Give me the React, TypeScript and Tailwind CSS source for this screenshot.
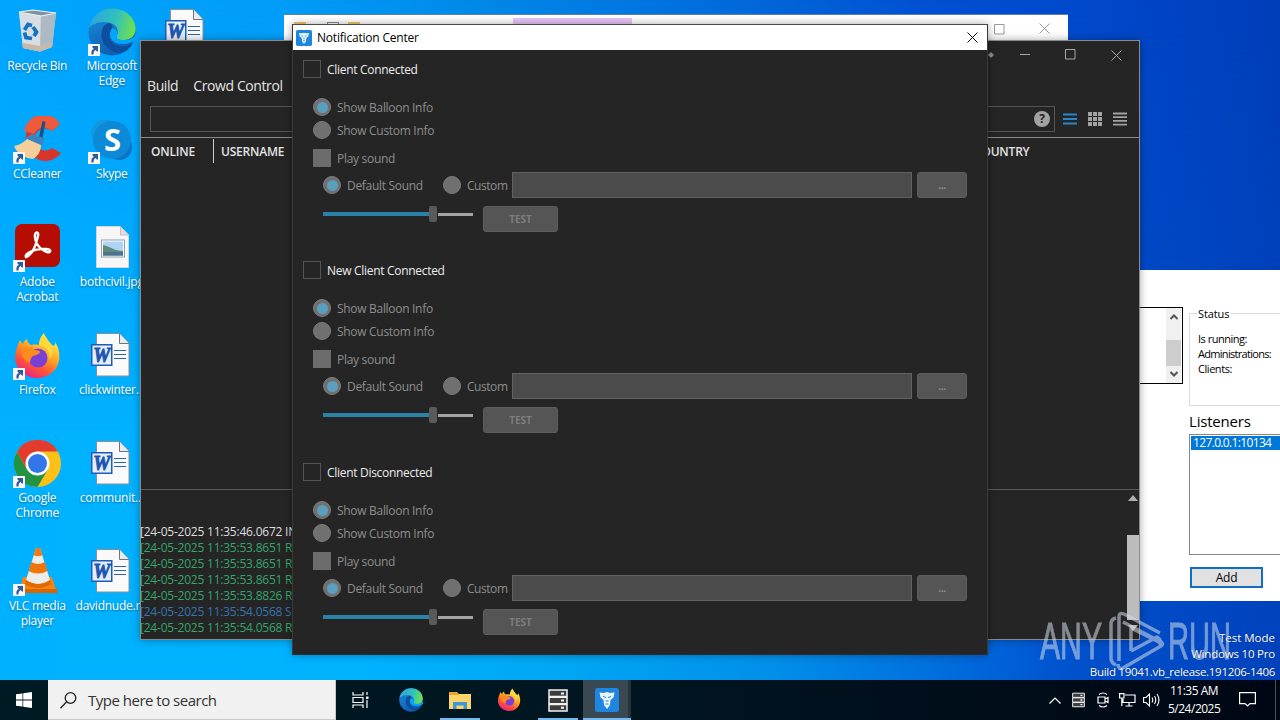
import type { ReactNode } from "react";

// --- Icons ---

const RecycleIcon = () => (
  <svg viewBox="0 0 48 48" className="w-12 h-12">
    <path d="M6 4 20 2 43 5 39 39 27 43.500 10 40z" fill="#c9d3da" />
    <path d="M6 4 28 8 27 43.500 10 40z" fill="#d6dde3" />
    <path d="M28 8 43 5 39 39 27 43.500z" fill="#aebac3" />
    <path d="M6 4 20 2 43 5 28 8z" fill="#7f939f" stroke="#eef3f5" strokeWidth="1.200" />
    <path d="M9.500 35 27 38 39.500 34 39 39 27 43.500 10 40z" fill="#c9b8a8" />
    <g fill="none" stroke="#1272c4" strokeWidth="3.800">
      <path d="m11.500 22 3.500-5.500 4 1" />
      <path d="m20 19 3.500 5-2.500 4" />
      <path d="m19 30.500-6-1-1.500-5" />
    </g>
  </svg>
);

const EdgeIcon = ({ className }: { className: string }) => (
  <svg viewBox="0 0 48 48" className={className}>
    <defs>
      <linearGradient id="edgeTop" x1="0" y1="0.300" x2="1" y2="0.500">
        <stop offset="0" stopColor="#2ba5e0" />
        <stop offset="0.550" stopColor="#30c0c0" />
        <stop offset="1" stopColor="#6fe04c" />
      </linearGradient>
      <linearGradient id="edgeLow" x1="0" y1="0" x2="0.400" y2="1">
        <stop offset="0" stopColor="#1a8fdc" />
        <stop offset="1" stopColor="#0f5fb4" />
      </linearGradient>
    </defs>
    <circle cx="24" cy="24" r="23.500" fill="url(#edgeLow)" />
    <path d="M1 20C3 8 13 .5 24 .5 38 .5 47.500 10 47.500 21c0 7-5 11-12 11-6 0-8-2-7-4 3-4 1-11-6-13C13 12 4 16 1 20z" fill="url(#edgeTop)" />
    <path d="M21 15c-8 2-9 12-6 19 3 6 9 10 15 11 7 0 12-4 14-9-6 4-16 3-20-2-3-4-3-8 0-12 1-4 0-6-3-7z" fill="#0d4f9e" />
    <path d="M24 20c-4 6-2 12 4 15 6 2 12 1 16-1l4-2v-6c-2 4-6 6-12 6-6 0-8-2-7-4 2-3 0-7-5-8z" fill="#02a5fc" />
  </svg>
);

const WordIcon = () => (
  <svg viewBox="0 0 48 48" className="w-12 h-12">
    <path d="M8.500 1.500h23l9.500 10v32.500h-32.500z" fill="#fafafa" stroke="#8a8f96" />
    <path d="M31.500 1.500v10h9.500" fill="#e8ecf0" stroke="#6d747c" />
    <path d="M26 18.500h12M26 22.500h12M26 26.500h12" stroke="#2b63b5" strokeWidth="1.200" />
    <rect x="3" y="12" width="21.500" height="22" fill="#1f5bb9" />
    <rect x="4.500" y="13.500" width="18.500" height="19" fill="#e4edf9" />
    <text x="13.700" y="30" textAnchor="middle" fontSize="20" textLength="17" lengthAdjust="spacingAndGlyphs" fontWeight="bold" fontStyle="italic" fontFamily="Liberation Serif, serif" fill="#1b55b0" stroke="#1b55b0" strokeWidth="0.900">W</text>
  </svg>
);

const CCleanerIcon = () => (
  <svg viewBox="0 0 48 48" className="w-12 h-12">
    <path d="M47 8A20 22 0 1 0 48 37L39 32A11 11 0 1 1 39 15z" fill="#d8352a" />
    <path d="M47 8A20 22 0 0 0 11 15l10 3A11 11 0 0 1 39 15z" fill="#ee5a3c" />
    <path d="m26 21 3.500-16 3 1-3 16z" fill="#1c4f80" />
    <path d="m12 22 7-4 12 4-1 7-17-2z" fill="#3c84c0" />
    <path d="M1 30c6-1 10-4 13-7l14 6c0 6-3 11-8 14C12 42 4 38 1 30z" fill="#f4cf9c" />
  </svg>
);

const SkypeIcon = () => (
  <svg viewBox="0 0 48 48" className="w-12 h-12">
    <circle cx="17" cy="17" r="13.500" fill="#1296dc" />
    <circle cx="31" cy="31" r="13" fill="#0a73c4" />
    <circle cx="24" cy="24" r="19" fill="#0c8ad8" />
    <text x="24.500" y="35" textAnchor="middle" fontSize="31" fontWeight="bold" fontFamily="Open Sans, sans-serif" fill="#fff">S</text>
  </svg>
);

const AcrobatIcon = () => (
  <svg viewBox="0 0 48 48" className="w-12 h-12">
    <rect x="2" y="0" width="45" height="43" rx="7" fill="#b50d02" />
    <path d="M13 33c-2-3 8-9 20-8 6 .500 5 4 1 3C27 26 21 18 22 11c.500-4 4-3 3 1-2 9-6 19-12 21z" fill="none" stroke="#fff" strokeWidth="2.400" />
  </svg>
);

const ImageFileIcon = () => (
  <svg viewBox="0 0 48 48" className="w-12 h-12">
    <path d="M8.500 2.500h24l8 8.500v32.500h-32z" fill="#f8f7f8" stroke="#d9d4d8" />
    <path d="M32.500 2.500v8.500h8z" fill="#e4dde2" stroke="#c4bcc4" />
    <rect x="13" y="15.500" width="24" height="18" fill="#8fa0b0" />
    <rect x="14" y="16.500" width="22" height="16" fill="#fff" />
    <rect x="15" y="17.500" width="20" height="14" fill="#b0d4f4" />
    <path d="M15 21c8 2 12 6 20 6v4.500h-20z" fill="#5d8a7c" />
    <path d="M15 28h20v3.500h-20z" fill="#4c7390" />
  </svg>
);

const FirefoxIcon = ({ className }: { className: string }) => (
  <svg viewBox="0 0 48 48" className={className}>
    <defs>
      <linearGradient id="fox" x1="0.800" y1="0.100" x2="0.300" y2="1">
        <stop offset="0" stopColor="#fff04a" />
        <stop offset="0.400" stopColor="#ffa325" />
        <stop offset="0.700" stopColor="#ff5536" />
        <stop offset="1" stopColor="#e8208a" />
      </linearGradient>
    </defs>
    <path d="M7 8c1 2 2 3 3 4 1-3 2-4 4-5 0 3 2 5 4 6 5-1 8 0 8 0 0-6 3-10 5-12 1 7 6 9 9 13 3-1 2-3 2-4 4 6 5 12 4 19-2 10-11 17-22 17S3 38 2 27c0-7 2-13 5-19z" fill="url(#fox)" />
    <circle cx="25" cy="26" r="9.500" fill="#7a3fd6" />
    <path d="M9 16c5-2 9-1 13 2 3 0 5 1 5 2-1 3-5 3-7 4-3 2-2 6-4 7-6-3-9-9-7-15z" fill="#ff8a1e" />
    <path d="M26 13c8 1 12 7 10 15 5-6 4-12 1-17l-6-9c-3 4-5 7-5 11z" fill="#ffd83a" />
  </svg>
);

const ChromeIcon = () => (
  <svg viewBox="0 0 48 48" className="w-12 h-12">
    <circle cx="24.500" cy="23.500" r="23.500" fill="#fbc116" />
    <path d="M24.500 23.500 14.100 29.500 4.100 11.700A23.500 23.500 0 0 0 24.500 47L34.900 29.500z" fill="#229342" />
    <path d="M24.500 11.500H44.900A23.500 23.500 0 0 0 4.100 11.700L14.100 29.500z" fill="#e33b2e" />
    <circle cx="24.500" cy="23.500" r="12" fill="#fff" />
    <circle cx="24.500" cy="23.500" r="9.500" fill="#3277ea" />
  </svg>
);

const VlcIcon = () => (
  <svg viewBox="0 0 48 48" className="w-12 h-12">
    <path d="M10 29h29l5 16H6z" fill="#f58410" />
    <path d="M6 41h38l1 4H5z" fill="#d96400" />
    <path d="M23 0q2-1.500 4 0l10 32q-12 8-24 0z" fill="#ececec" />
    <path d="M23 0q2-1.500 4 0l2.500 7q-4.500 2.500-9 0z" fill="#f27a10" />
    <path d="m18.500 14q6.500 4 13 0l3 9q-9.500 5-19 0z" fill="#f07408" />
    <path d="M13 32q12 8 24 0l1.500 4q-13.500 8-27 0z" fill="#e06a00" />
  </svg>
);

const ShortcutBadge = () => (
  <svg viewBox="0 0 12 12" className="absolute left-0 bottom-0 w-3 h-3">
    <path d="M0 0h12v12H0z" fill="#f7f7f7" />
    <path d="M3.500 10.500C3 7 4 5.500 6 5L4.500 3.500V2H10v5.500H9L7.500 6C6 7 5.500 8 5.500 10.500z" fill="#2c5a9c" />
  </svg>
);

// white figure on a blue tile, used by the dialog title and the taskbar
const AppIcon = ({ className }: { className: string }) => (
  <svg viewBox="0 0 24 24" className={className}>
    <rect width="24" height="24" rx="2.500" fill="#1f86e0" />
    <path d="M4.500 4.500 9 5l3-1 3 1 4.500-.500-1 5-3 2.500-.500 5L12 21l-3-4-.500-5-3-2.500z" fill="#e8f4ff" />
    <path d="m8 8.500 3 1M16 8.500l-3 1M10.500 13h3M10.500 16h3" stroke="#1f86e0" />
  </svg>
);

const ServerIcon = ({ className }: { className: string }) => (
  <svg viewBox="0 0 20 23" className={className} fill="#3d3d3d" stroke="#f2f2f2" strokeWidth="1.500">
    <path d="M1 1h18v6.500H1zM1 8.200h18v6.500H1zM1 15.400h18v6.500H1z" />
    <path d="M13 4.500h3M13 11.500h3M13 18.700h3" strokeWidth="2" />
  </svg>
);

const FolderIcon = () => (
  <svg viewBox="0 0 22 19" className="w-[22px] h-[19px]">
    <path d="M0 1h8l2 2h12v15H0z" fill="#e8a82c" />
    <path d="M0 4h9l1.500-1H22v15H0z" fill="#fcd56a" />
    <path d="M4 18v-7h14v7h-3.500v-3.500h-7V18z" fill="#3f97d8" />
  </svg>
);

const CloseIcon = ({ className }: { className: string }) => (
  <svg viewBox="0 0 11 11" className={className} fill="none" stroke="currentColor">
    <path d="m.500.500 10 10M10.500.500l-10 10" />
  </svg>
);

const MaxIcon = ({ className }: { className: string }) => (
  <svg viewBox="0 0 11 11" className={className} fill="none" stroke="currentColor">
    <path d="M.5.500h9.500v9.500H.5z" />
  </svg>
);

// --- Desktop ---

type Item = { icon: ReactNode; label: string[]; shortcut?: boolean };

const columns: Item[][] = [
  [
    { icon: <RecycleIcon />, label: ["Recycle Bin"] },
    { icon: <CCleanerIcon />, label: ["CCleaner"], shortcut: true },
    { icon: <AcrobatIcon />, label: ["Adobe", "Acrobat"], shortcut: true },
    { icon: <FirefoxIcon className="w-12 h-12" />, label: ["Firefox"], shortcut: true },
    { icon: <ChromeIcon />, label: ["Google", "Chrome"], shortcut: true },
    { icon: <VlcIcon />, label: ["VLC media", "player"], shortcut: true },
  ],
  [
    { icon: <EdgeIcon className="w-12 h-12" />, label: ["Microsoft", "Edge"], shortcut: true },
    { icon: <SkypeIcon />, label: ["Skype"], shortcut: true },
    { icon: <ImageFileIcon />, label: ["bothcivil.jpg"] },
    { icon: <WordIcon />, label: ["clickwinter..."] },
    { icon: <WordIcon />, label: ["communit..."] },
    { icon: <WordIcon />, label: ["davidnude.rtf"] },
  ],
  [{ icon: <WordIcon />, label: [] }],
];

const Desktop = () => (
  <div className="flex pt-2">
    {columns.map((col, i) => (
      <div key={i} className="w-[74.5px] flex flex-col">
        {col.map((item, j) => (
          <div key={j} className="h-[108px] flex flex-col items-center">
            <div className="relative w-12 h-12">
              {item.icon}
              {item.shortcut && <ShortcutBadge />}
            </div>
            <div className="mt-[2px] text-xs leading-[15px] tracking-[-0.25px] text-white text-center whitespace-nowrap [text-shadow:0_1px_2px_rgba(0,0,0,0.4)]">
              {item.label.map((line) => (
                <div key={line}>{line}</div>
              ))}
            </div>
          </div>
        ))}
      </div>
    ))}
  </div>
);

// --- Windows behind the dialog ---

const ExplorerWindow = () => (
  <div className="absolute left-[284px] top-[14px] w-[784px] h-[60px] bg-white border-t border-[#5b7fa8] flex items-start text-[#999]">
    <div className="ml-[10px] mt-[7px] w-3 h-3 bg-[#f6c667]" />
    <div className="ml-[21px] mt-[7px] w-3 h-3 border border-[#888]" />
    <div className="ml-[9px] mt-[7px] w-3 h-3 bg-[#f6c667]" />
    <div className="ml-[153px] mt-[3px] w-[119px] h-5 bg-[#e6c6f8]" />
    <MaxIcon className="ml-[362px] mt-[9px] w-[11px] h-[11px]" />
    <CloseIcon className="ml-[34px] mt-[8px] w-[11px] h-[11px]" />
  </div>
);

const ServerWindow = () => (
  <div className="absolute left-[1130px] top-[270px] w-[150px] h-[331px] bg-white overflow-hidden flex text-[11px] leading-[15px] text-black tracking-[-0.3px]">
    <div className="shrink-0 mt-[37px] w-[53px] h-[77px] border border-black flex justify-end pr-px">
      <div className="w-[15px] bg-[#f0f0f0] flex flex-col items-center justify-between py-[6px]">
        <svg viewBox="0 0 8 6" className="w-2 h-1.5" fill="none" stroke="#555" strokeWidth="2">
          <path d="m.500 5 3.500-3.500L7.500 5" />
        </svg>
        <div className="w-[15px] h-[26px] mt-[15px] bg-[#cdcdcd]" />
        <svg viewBox="0 0 8 6" className="w-2 h-1.5" fill="none" stroke="#555" strokeWidth="2">
          <path d="m.500 1 3.500 3.500L7.500 1" />
        </svg>
      </div>
    </div>
    <div className="shrink-0 ml-[6px] w-[120px] flex flex-col">
      <div className="mt-[43px] h-[93px] border border-[#dcdcdc] pl-2">
        <div className="-mt-[8px] -ml-px w-[34px] bg-white pl-px tracking-[-0.1px]">Status</div>
        <div className="mt-[10px] whitespace-nowrap tracking-[-0.5px]">Is running:</div>
        <div className="whitespace-nowrap tracking-[-0.7px]">Administrations:</div>
        <div className="whitespace-nowrap tracking-[-0.45px]">Clients:</div>
      </div>
      <div className="mt-[5px] h-[20px] text-[15px] leading-[20px] tracking-[-0.2px]">Listeners</div>
      <div className="mt-[3px] h-[121px] border border-[#828790] p-px">
        <div className="h-[14px] leading-[14px] bg-[#0078d7] text-white pl-[2px] text-[12px] tracking-[-0.65px]">127.0.0.1:10134</div>
      </div>
      <div className="mt-[12px] ml-px w-[73px] h-[21px] border-2 border-[#0f6fc0] bg-[#e1e1e1] text-[12px] leading-[17px] text-center">Add</div>
    </div>
  </div>
);

const logs = [
  { text: "[24-05-2025 11:35:46.0672 INFO]", color: "text-[#dedede]" },
  { text: "[24-05-2025 11:35:53.8651 RECV]", color: "text-[#33a56c]" },
  { text: "[24-05-2025 11:35:53.8651 RECV]", color: "text-[#33a56c]" },
  { text: "[24-05-2025 11:35:53.8651 RECV]", color: "text-[#33a56c]" },
  { text: "[24-05-2025 11:35:53.8826 RECV]", color: "text-[#33a56c]" },
  { text: "[24-05-2025 11:35:54.0568 SEND]", color: "text-[#3474b4]" },
  { text: "[24-05-2025 11:35:54.0568 RECV]", color: "text-[#33a56c]" },
];

const MainWindow = () => (
  <div className="absolute left-[140px] top-[40px] w-[1000px] h-[600px] bg-[#252525] border border-[#8c8c8c] flex flex-col text-[#e4e4e4] shadow-[0_0_8px_rgba(0,0,0,0.35)]">
    <div className="h-[30px] flex justify-end items-start pr-[17px] text-[#a8a8a8]">
      <svg viewBox="0 0 6 8" className="w-1.5 h-2 mt-[10px] mr-[26px]">
        <path d="m3 1 3 3-3 3-3-3z" fill="#8a8a8a" />
      </svg>
      <div className="w-[10px] h-px mt-[13px] mr-[35px] bg-[#a8a8a8]" />
      <MaxIcon className="mt-[8px] mr-[35px] w-[11px] h-[11px]" />
      <CloseIcon className="mt-[9px] w-[11px] h-[11px]" />
    </div>
    <div className="h-[30px] flex items-center gap-[15px] pl-[6px] pb-[2px] text-[14px] tracking-[-0.4px]">
      <span>Build</span>
      <span>Crowd Control</span>
    </div>
    <div className="h-[37px] flex items-center pl-[9px] pr-[11px] border-b border-[#8a8a8a] text-[#a2a2a2]">
      <div className="w-[905px] h-[26px] border border-[#555] flex items-center justify-end pr-[4px]">
        <div className="w-4 h-4 rounded-full bg-[#a2a2a2] text-[#252525] text-[12px] font-bold leading-4 text-center">?</div>
      </div>
      <svg viewBox="0 0 14 14" className="ml-2 w-3.5 h-3.5" stroke="#2a86cc" strokeWidth="1.800">
        <path d="M0 2.500h14M0 7h14M0 11.500h14" />
      </svg>
      <svg viewBox="0 0 14 14" className="ml-[11px] w-3.5 h-3.5" stroke="#a2a2a2" strokeWidth="4" strokeDasharray="4 1">
        <path d="M0 2h14M0 7h14M0 12h14" />
      </svg>
      <svg viewBox="0 0 14 14" className="ml-[11px] w-3.5 h-3.5" stroke="#a2a2a2" strokeWidth="1.800">
        <path d="M0 1.500h14M0 5.200h14M0 8.900h14M0 12.600h14" />
      </svg>
    </div>
    <div className="h-[26px] flex items-center text-[12px] leading-6 font-semibold tracking-[-0.2px]">
      <div className="w-[73px] h-6 pl-[10px] pt-px border-r border-[#ccc]">ONLINE</div>
      <div className="w-[760px] h-6 pl-[7px] pt-px">USERNAME</div>
      <div className="h-6 pt-px">COUNTRY</div>
    </div>
    <div className="flex-1" />
    <div className="h-[150px] border-t border-[#5a5a5a] flex justify-between">
      <div className="pt-[34px] -ml-px text-[12px] leading-4 tracking-[-0.22px] whitespace-nowrap">
        {logs.map((log, i) => (
          <div key={i} className={log.color}>{log.text}</div>
        ))}
      </div>
      <div className="w-3 flex flex-col items-center">
        <svg viewBox="0 0 10 6" className="mt-[5px] w-2.5 h-1.5">
          <path d="M5 0l5 6H0z" fill="#b0b0b0" />
        </svg>
        <div className="mt-[34px] w-3 h-[85px] bg-[#bcbcbc]" />
        <svg viewBox="0 0 10 6" className="mt-[5px] w-2.5 h-1.5">
          <path d="M0 0h10L5 6z" fill="#b0b0b0" />
        </svg>
      </div>
    </div>
  </div>
);

// --- Notification Center ---

const Radio = ({ label, checked }: { label: string; checked?: boolean }) => (
  <div className="h-[18px] flex items-center gap-[6px]">
    <div className="w-[18px] h-[18px] rounded-full bg-[#707070] border border-[#7c7c7c] flex items-center justify-center">
      {checked && <div className="w-[11px] h-[11px] rounded-full bg-[#5b9fbe]" />}
    </div>
    <span className="pt-[2px]">{label}</span>
  </div>
);

const Section = ({ title, className }: { title: string; className: string }) => (
  <section className={`pt-[10px] pl-[10px] flex flex-col text-[12px] leading-[18px] tracking-[-0.3px] text-[#8e8e8e] whitespace-nowrap ${className}`}>
    <div className="h-[18px] flex items-center gap-[6px] text-[#ececec]">
      <div className="w-[18px] h-[18px] border border-[#545454]" />
      <span className="pt-[2px]">{title}</span>
    </div>
    <div className="mt-5 pl-[10px] flex flex-col gap-[5px]">
      <Radio label="Show Balloon Info" checked />
      <Radio label="Show Custom Info" />
    </div>
    <div className="mt-[10px] h-[18px] pl-[10px] flex items-center gap-[6px]">
      <div className="w-[18px] h-[18px] bg-[#6c6c6c]" />
      <span className="pt-[2px]">Play sound</span>
    </div>
    <div className="mt-[5px] pl-[20px] h-[26px] flex items-center">
      <div className="w-[120px]">
        <Radio label="Default Sound" checked />
      </div>
      <div className="w-[69px] tracking-[-0.45px]">
        <Radio label="Custom" />
      </div>
      <div className="w-[400px] h-[26px] bg-[#4b4b4b] border border-[#626262]" />
      <div className="ml-[5px] w-[50px] h-[26px] rounded-[3px] bg-[#555] border border-[#5e5e5e] text-[10px] font-bold leading-[25px] text-center">...</div>
    </div>
    <div className="mt-2 pl-[20px] flex items-start">
      <div className="w-[150px] h-4 flex items-center">
        <div className="w-[106px] h-1 bg-[#2a82a8]" />
        <div className="w-2 h-4 rounded-[2px] bg-[#5a5a5a]" />
        <div className="ml-px flex-1 h-[3px] bg-[#a4a4a4]" />
      </div>
      <div className="ml-[10px] w-[75px] h-[26px] rounded-[3px] bg-[#555] border border-[#5e5e5e] text-[10px] font-bold leading-[25px] tracking-normal text-center text-[#7d7d7d]">TEST</div>
    </div>
  </section>
);

const NotificationCenter = () => (
  <div className="absolute left-[292px] top-[24px] w-[696px] h-[631px] bg-[#252525] border border-[#3a3a3a] border-t-[#4a4a4a] border-b-[#2c2c2c] flex flex-col shadow-[0_0_8px_rgba(0,0,0,0.35)]">
    <div className="h-[25px] bg-white flex items-center text-black text-[12px] tracking-[-0.2px]">
      <AppIcon className="ml-[3px] w-4 h-4" />
      <span className="ml-[5px]">Notification Center</span>
      <CloseIcon className="ml-auto mr-[9px] w-[11px] h-[11px]" />
    </div>
    <Section title="Client Connected" className="h-[201px]" />
    <Section title="New Client Connected" className="h-[202px]" />
    <Section title="Client Disconnected" className="h-[200px]" />
  </div>
);

// --- Overlays on the wallpaper ---

const Watermark = () => (
  <svg viewBox="0 0 200 70" className="absolute left-[1035px] top-[605px] w-[200px] h-[70px] opacity-55">
    <g fill="#d4dcea" stroke="#d4dcea" strokeWidth="1" fontFamily="Liberation Sans Narrow, Liberation Sans, sans-serif" fontSize="52">
      <text x="5" y="54" textLength="62" lengthAdjust="spacingAndGlyphs">ANY</text>
      <text x="133" y="54" textLength="63" lengthAdjust="spacingAndGlyphs">RUN</text>
    </g>
    <g fill="none" stroke="#d4dcea" strokeWidth="3.500" strokeLinejoin="round">
      <path d="M81 13q-5 1-5 6v34q0 5 5 7" />
      <path d="M84 56V12q0-5 5-3l36 19M96 46V23l28 14" />
      <path d="m88 17 38 20q3 2 0 4L88 63q-5 2-5-4" />
      <path d="m96 46 26-14q6 4 2 8" />
    </g>
  </svg>
);

const BuildInfo = () => (
  <div className="absolute right-[5px] top-[629px] text-right text-white text-[11.5px] leading-[17px] tracking-[-0.3px] whitespace-nowrap [text-shadow:0_0_1px_rgba(0,0,0,0.5)]">
    <div className="tracking-normal">Test Mode</div>
    <div className="-mt-px tracking-[-0.2px]">Windows 10 Pro</div>
    <div className="mt-px">Build 19041.vb_release.191206-1406</div>
  </div>
);

const Taskbar = () => (
  <div className="absolute left-0 top-[680px] w-[1280px] h-10 bg-linear-to-r from-[#001a24] via-[#001520] to-[#000714] flex text-white">
    <div className="w-12 flex items-center justify-center">
      <svg viewBox="0 0 16 16" className="w-4 h-4" fill="#fff">
        <path d="M0 2.300 6.500 1.400v6.200H0zM7.200 1.300 16 0v7.600H7.200zM0 8.400h6.500v6.200L0 13.700zM7.200 8.400H16V16l-8.800-1.300z" />
      </svg>
    </div>
    <div className="w-[288px] bg-[#f1f1f1] border-b border-r border-[#c8c8c8] flex items-center pl-3 pt-[2px] text-[#333] text-[15px] tracking-[-0.5px]">
      <svg viewBox="0 0 17 17" className="w-[17px] h-[17px] mr-[11px]" fill="none" stroke="#222" strokeWidth="1.300">
        <circle cx="10.500" cy="6" r="5.300" />
        <path d="M6.700 9.800.5 16.300" />
      </svg>
      Type here to search
    </div>
    <div className="w-[49px] flex items-center justify-center">
      <svg viewBox="0 0 17 16" className="w-[17px] h-4" fill="none" stroke="#fff" strokeWidth="1.200">
        <path d="M1 0v3h10V0M1 5.500h10v5H1zM1 16v-3h10v3M15 0v3M15 8v8" />
        <path d="M14 4.500h2.500V7H14z" fill="#fff" stroke="none" />
      </svg>
    </div>
    <div className="w-[51px] flex items-center justify-center">
      <EdgeIcon className="w-6 h-6" />
    </div>
    <div className="w-[47px] flex items-center justify-center">
      <FolderIcon />
    </div>
    <div className="w-[51px] flex items-center justify-center">
      <FirefoxIcon className="w-6 h-6" />
    </div>
    <div className="w-[49px] pr-[2px] flex items-center justify-center">
      <ServerIcon className="w-5 h-[23px]" />
    </div>
    <div className="w-[45px] pl-[3px] bg-[#3a4852] flex items-center justify-center">
      <AppIcon className="w-6 h-6" />
    </div>
    <div className="w-[3px] bg-[#25333d]" />
    <div className="absolute left-[440px] bottom-0 w-10 h-[2px] bg-[#76b9ed]" />
    <div className="absolute left-[538px] bottom-0 w-10 h-[2px] bg-[#76b9ed]" />
    <div className="absolute left-[583px] bottom-0 w-12 h-[2px] bg-[#76b9ed]" />
    <div className="ml-auto mr-[4px] flex items-center border-r border-[#4a525c]">
      <svg viewBox="0 0 12 7" className="w-3 h-[7px]" fill="none" stroke="#fff" strokeWidth="1.200">
        <path d="m.500 6.500 5.500-5.500 5.500 5.500" />
      </svg>
      <ServerIcon className="ml-[11px] w-[13px] h-4" />
      <svg viewBox="0 0 14 16" className="ml-[11px] w-3.5 h-4" fill="none" stroke="#fff" strokeWidth="1.200">
        <path d="M3 2.500q4-3 8 0M3 13.500q4 3 8 0M2 5h7v6H2zM9 7l3-1.500v5L9 9z" />
      </svg>
      <svg viewBox="0 0 17 14" className="ml-[9px] w-[17px] h-3.5" fill="none" stroke="#fff" strokeWidth="1.200">
        <path d="M6 2h10v7.500H4V6M10 9.500v3M6.500 13h7M.6.600h4.400V5H.6zM2.800 5v8" />
      </svg>
      <svg viewBox="0 0 17 14" className="ml-[7px] w-[17px] h-3.5" fill="none" stroke="#fff" strokeWidth="1.100">
        <path d="M.6 4.500H3L6.500 1v12L3 9.500H.6zM9 4.500q1.500 2.500 0 5M11.500 3q2.500 4 0 8M14 1q4 6 0 12" />
      </svg>
      <div className="ml-[8px] mr-px w-[52px] text-[12px] leading-[18px] text-center tracking-[-0.5px] whitespace-nowrap">
        <div>11:35 AM</div>
        <div>5/24/2025</div>
      </div>
      <svg viewBox="0 0 17 16" className="ml-[18px] mr-[19px] w-[17px] h-4" fill="none" stroke="#fff" strokeWidth="1.200">
        <path d="M.6.600h15.800v11H11L8.500 14 6 11.600H.6z" />
      </svg>
    </div>
  </div>
);

export default function App() {
  return (
    <div className="relative w-[1280px] h-[720px] overflow-hidden font-['Open_Sans',sans-serif] bg-[linear-gradient(90deg,#00b1ff_0%,#00b3ff_28%,#00a6f4_44%,#0090ea_60%,#0062d8_78%,#0050cc_84%,#0042bc_100%)]">
      <div className="absolute inset-0 bg-[linear-gradient(90deg,#00a5fe_0%,#009cf8_22%,#0084e6_40%,#0068da_58%,#0050d0_72%,#0049cc_84%,#003db8_100%)] [mask-image:linear-gradient(180deg,black_0%,transparent_60%)]" />
      <div className="absolute inset-0">
        <Desktop />
      </div>
      <ExplorerWindow />
      <ServerWindow />
      <MainWindow />
      <NotificationCenter />
      <Watermark />
      <BuildInfo />
      <Taskbar />
    </div>
  );
}
